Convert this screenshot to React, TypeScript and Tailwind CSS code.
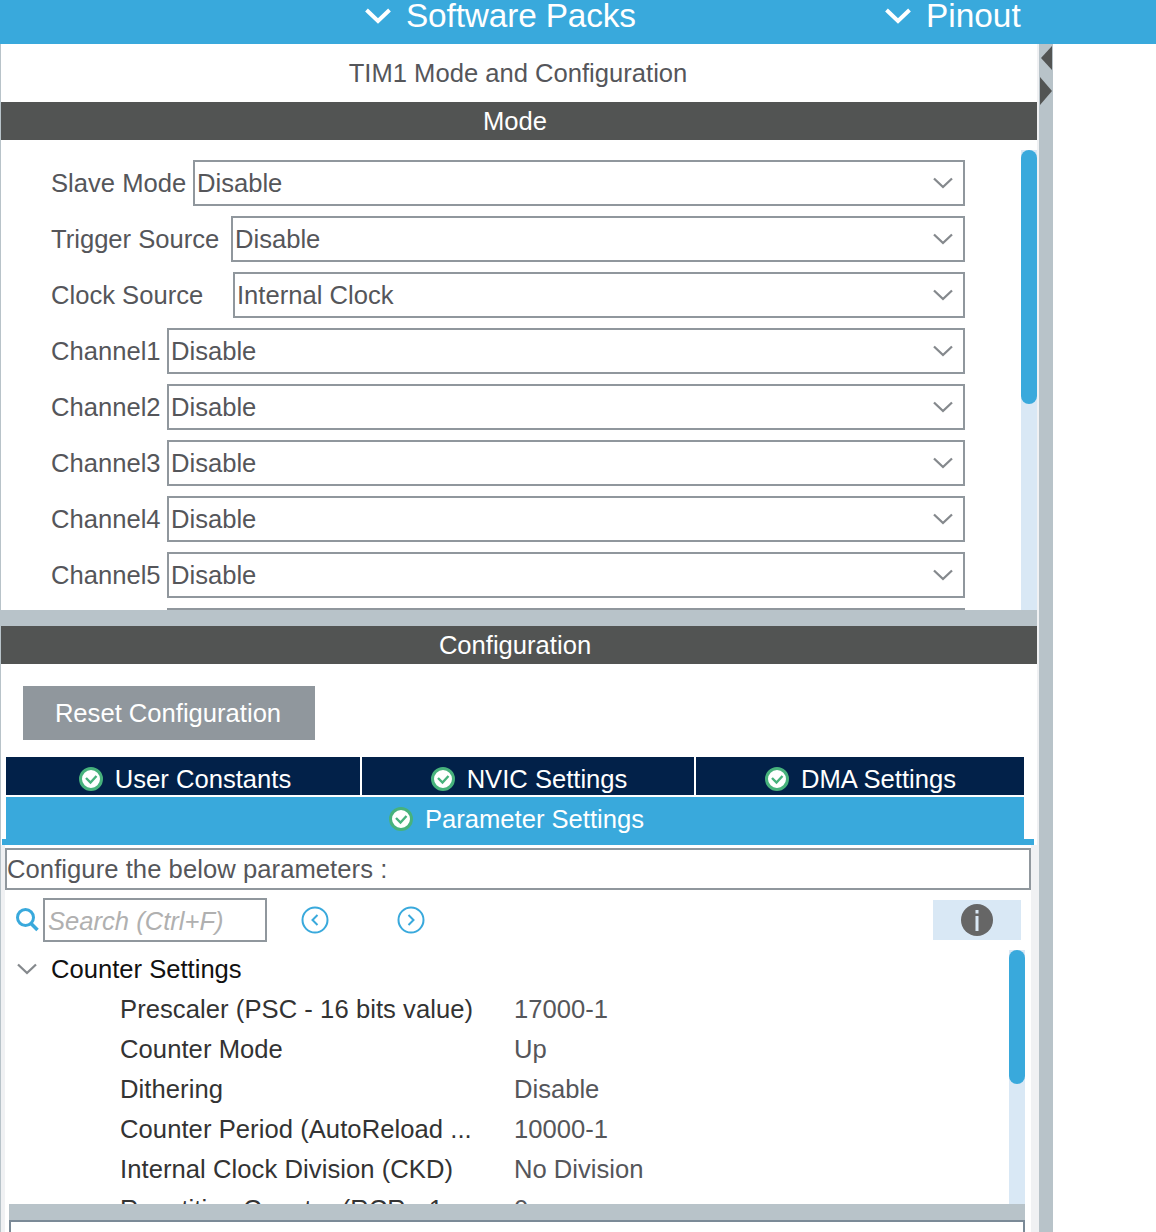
const modeRows = [
  { label: "Slave Mode", value: "Disable", labelWidth: "w-[142px]" },
  { label: "Trigger Source", value: "Disable", labelWidth: "w-[180px]" },
  { label: "Clock Source", value: "Internal Clock", labelWidth: "w-[182px]" },
  { label: "Channel1", value: "Disable", labelWidth: "w-[116px]" },
  { label: "Channel2", value: "Disable", labelWidth: "w-[116px]" },
  { label: "Channel3", value: "Disable", labelWidth: "w-[116px]" },
  { label: "Channel4", value: "Disable", labelWidth: "w-[116px]" },
  { label: "Channel5", value: "Disable", labelWidth: "w-[116px]" },
  { label: "", value: "", labelWidth: "w-[116px]" },
];

const params = [
  { label: "Prescaler (PSC - 16 bits value)", value: "17000-1" },
  { label: "Counter Mode", value: "Up" },
  { label: "Dithering", value: "Disable" },
  { label: "Counter Period (AutoReload ...", value: "10000-1" },
  { label: "Internal Clock Division (CKD)", value: "No Division" },
  { label: "Repetition Counter (RCR - 1...", value: "0" },
];

function Chevron({ className }: { className: string }) {
  return (
    <svg viewBox="0 0 20 12" className={className} fill="none" stroke="currentColor">
      <path d="M1 1.5 L10 10 L19 1.5" strokeWidth="2.3" />
    </svg>
  );
}

function HeaderChevron() {
  return (
    <svg viewBox="0 0 26 16" className="h-[16px] w-[26px] shrink-0 text-white" fill="none" stroke="currentColor">
      <path d="M1.5 2 L13 13 L24.5 2" strokeWidth="4" />
    </svg>
  );
}

function CheckIcon() {
  return (
    <svg viewBox="0 0 24 24" className="h-[24px] w-[24px] shrink-0">
      <circle cx="12" cy="12" r="10.5" fill="#ffffff" stroke="#47b27c" strokeWidth="3" />
      <path d="M7 11 L11.5 15.5 L17.5 9" fill="none" stroke="#47b27c" strokeWidth="2.4" />
    </svg>
  );
}

function CircleArrow({ dir }: { dir: "left" | "right" }) {
  return (
    <svg viewBox="0 0 28 28" className="h-[28px] w-[28px]" fill="none" stroke="#39a9dc">
      <circle cx="14" cy="14" r="12.5" strokeWidth="2" />
      <path d={dir === "left" ? "M16.5 9 L11.5 14 L16.5 19" : "M11.5 9 L16.5 14 L11.5 19"} strokeWidth="2" />
    </svg>
  );
}

function SectionBar({ title }: { title: string }) {
  return (
    <div className="flex h-[38px] shrink-0 items-center justify-center bg-[#525453] pr-[8px] text-white">
      {title}
    </div>
  );
}

function Scrollbar({ thumb, className }: { thumb: string; className: string }) {
  return (
    <div className={`w-[16px] shrink-0 bg-[#d9e8f5] ${className}`}>
      <div className={`w-[16px] rounded-full bg-[#39a9dc] ${thumb}`} />
    </div>
  );
}

function ModeSelect({ label, value, labelWidth }: { label: string; value: string; labelWidth: string }) {
  return (
    <div className="flex h-[46px] shrink-0 items-center">
      <div className={`shrink-0 ${labelWidth}`}>{label}</div>
      <div className="flex h-[46px] flex-1 items-center justify-between border-2 border-[#90979d] pl-[2px] pr-[10px]">
        <span>{value}</span>
        {value ? <Chevron className="h-[12px] w-[20px] text-[#85898d]" /> : null}
      </div>
    </div>
  );
}

function Tab({ title, className }: { title: string; className: string }) {
  return (
    <div className={`flex h-[38px] items-center justify-center gap-[12px] bg-[#022149] pt-[6px] text-white ${className}`}>
      <CheckIcon />
      <span>{title}</span>
    </div>
  );
}

export default function App() {
  return (
    <div className="flex h-[1232px] w-[1156px] flex-col overflow-hidden bg-white font-['Liberation_Sans',Arial,sans-serif] text-[25.6px] leading-[30px] text-[#55565a]">
      <header className="flex h-[44px] shrink-0 items-center overflow-hidden bg-[#39a9dc] pb-[13px] pl-[365px] text-[33.4px] text-white">
        <HeaderChevron />
        <span className="ml-[15px] w-[479px] tracking-[-0.15px]">Software Packs</span>
        <HeaderChevron />
        <span className="ml-[15px]">Pinout</span>
      </header>

      <div className="flex min-h-0 flex-1">
        <main className="flex w-[1037px] flex-col border-l border-[#b8c3c9]">
          <div className="flex h-[58px] shrink-0 items-center justify-center pb-[1px] pr-[2px]">TIM1 Mode and Configuration</div>
          <SectionBar title="Mode" />

          <section className="flex h-[470px] shrink-0 overflow-hidden">
            <div className="flex flex-1 flex-col gap-[10px] pl-[50px] pr-[56px] pt-[20px]">
              {modeRows.map((row, i) => (
                <ModeSelect key={i} {...row} />
              ))}
            </div>
            <Scrollbar className="mt-[10px]" thumb="h-[254px]" />
          </section>

          <div className="-ml-px h-[16px] shrink-0 bg-[#b8c3c9]" />
          <SectionBar title="Configuration" />

          <div className="flex min-h-0 flex-1 flex-col">
            <button className="ml-[22px] mt-[22px] h-[54px] w-[292px] shrink-0 bg-[#90979d] pr-[2px] text-white">
              Reset Configuration
            </button>

            <div className="ml-[5px] mt-[17px] flex w-[1018px] gap-[2px]">
              <Tab title="User Constants" className="w-[354px] pl-[4px]" />
              <Tab title="NVIC Settings" className="w-[332px] pl-[2px]" />
              <Tab title="DMA Settings" className="flex-1 pl-[1px]" />
            </div>
            <div className="ml-[5px] mt-[2px] flex h-[42px] w-[1018px] shrink-0 items-center justify-center gap-[12px] bg-[#39a9dc] pl-[3px] pt-[2px] text-white">
              <CheckIcon />
              <span>Parameter Settings</span>
            </div>
            <div className="ml-px h-[6px] w-[1032px] shrink-0 bg-[#39a9dc]" />

            <div className="flex min-h-0 flex-1">
              <div className="w-[4px] shrink-0 bg-[#f0f1f3]" />
              <div className="flex min-w-0 flex-1 flex-col">
                <div className="mt-[3px] flex h-[42px] w-[1026px] shrink-0 items-center border-2 border-[#90979d] tracking-[0.06px]">
                  Configure the below parameters :
                </div>

                <div className="mt-[8px] flex h-[44px] shrink-0 items-center">
                  <svg viewBox="0 0 24 26" className="ml-[10px] h-[26px] w-[24px]" fill="none" stroke="#39a9dc">
                    <circle cx="10.5" cy="10.5" r="8" strokeWidth="3" />
                    <path d="M16 16.5 L22.5 23" strokeWidth="3.5" />
                  </svg>
                  <div className="ml-[4px] flex h-[44px] w-[224px] items-center border-2 border-[#90979d] pl-[3px] pt-[2px] italic text-[#b0b0b0]">
                    Search (Ctrl+F)
                  </div>
                  <div className="ml-[34px]">
                    <CircleArrow dir="left" />
                  </div>
                  <div className="ml-[68px]">
                    <CircleArrow dir="right" />
                  </div>
                  <div className="ml-[508px] flex h-[40px] w-[88px] items-center justify-center bg-[#d9e8f5]">
                    <svg viewBox="0 0 32 32" className="h-[32px] w-[32px]">
                      <circle cx="16" cy="16" r="16" fill="#666666" />
                      <rect x="14.5" y="12" width="3" height="15" fill="#d9e8f5" />
                      <rect x="14.5" y="6" width="3" height="3.5" fill="#d9e8f5" />
                    </svg>
                  </div>
                </div>

                <div className="relative mt-[8px] flex h-[254px] shrink-0">
                  <div className="flex-1 overflow-hidden">
                    <div className="flex h-[38px] items-center pl-[12px] text-[#111111]">
                      <Chevron className="h-[12px] w-[20px] text-[#85898d]" />
                      <span className="ml-[14px]">Counter Settings</span>
                    </div>
                    {params.map((row) => (
                      <div key={row.label} className="mt-[2px] flex h-[38px] items-center pl-[115px] first:mt-0">
                        <span className="w-[394px] shrink-0 tracking-[0.06px] text-[#333333]">{row.label}</span>
                        <span>{row.value}</span>
                      </div>
                    ))}
                  </div>
                  <Scrollbar className="mr-[6px]" thumb="h-[134px]" />
                </div>

                <div className="ml-[4px] h-[16px] w-[1016px] shrink-0 bg-[#b8c3c9]" />
                <div className="ml-[4px] w-[1016px] flex-1 border-x-2 border-t-2 border-[#7b8a97]" />
              </div>
              <div className="w-[6px] shrink-0 bg-[#f0f1f3]" />
            </div>
          </div>
        </main>

        <div className="flex w-[2px] shrink-0 bg-[#f0f1f3]" />
        <aside className="flex w-[14px] shrink-0 flex-col items-start bg-[#b8c3c9] pl-px pt-[2px]">
          <svg viewBox="0 0 12 24" className="h-[24px] w-[12px]">
            <path d="M12 0 V24 L1 12 Z" fill="#525453" />
          </svg>
          <svg viewBox="0 0 12 28" className="mt-[7px] h-[28px] w-[12px]">
            <path d="M0 0 V28 L12 14 Z" fill="#525453" />
          </svg>
        </aside>
      </div>
    </div>
  );
}
